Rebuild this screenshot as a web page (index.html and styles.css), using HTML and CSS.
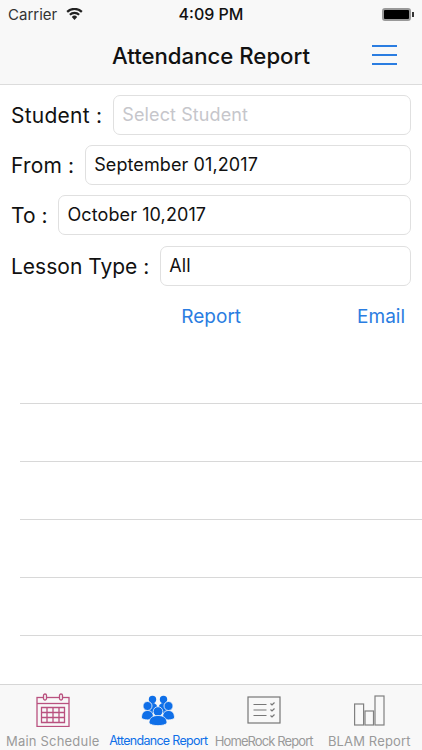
FILE: index.html
```html
<!DOCTYPE html>
<html lang="en">

<head>
  <meta charset="UTF-8">
  <meta name="viewport" content="width=device-width, initial-scale=1.0">
  <title>Attendance Report</title>
  <link rel="stylesheet" href="styles.css">
</head>

<body>
  <div class="screen">
    <header class="top">
      <div class="status">
        <div class="status-left">
          <span>Carrier</span>
          <svg class="wifi" width="17" height="12" viewBox="0 0 17 12">
            <path d="M8.5 12 5.8 8.9a3.8 3.8 0 0 1 5.4 0zM4.6 7.6 3.1 6a7.7 7.7 0 0 1 10.8 0l-1.500 1.600a5.600 5.600 0 0 0-7.800 0zM1.900 4.700.4 3.100a11.600 11.600 0 0 1 16.200 0l-1.500 1.600a9.500 9.500 0 0 0-13.200 0z" fill="#222" />
          </svg>
        </div>
        <span class="clock">4:09 PM</span>
        <div class="battery-wrap">
          <div class="battery"></div>
          <span class="battery-nub"></span>
        </div>
      </div>
      <div class="navbar">
        <h1>Attendance Report</h1>
        <div class="menu"><span></span><span></span><span></span></div>
      </div>
    </header>

    <main class="content">
      <div class="row">
        <label class="label-student">Student :</label>
        <div class="field placeholder">Select Student</div>
      </div>
      <div class="row">
        <label class="label-from">From :</label>
        <div class="field">September 01,2017</div>
      </div>
      <div class="row">
        <label class="label-to">To :</label>
        <div class="field">October 10,2017</div>
      </div>
      <div class="row row-lesson">
        <label class="label-lesson">Lesson Type :</label>
        <div class="field">All</div>
      </div>
      <div class="actions">
        <a class="report-link">Report</a>
        <a class="email-link">Email</a>
      </div>
      <ul class="list">
        <li></li>
        <li></li>
        <li></li>
        <li></li>
        <li></li>
      </ul>
    </main>

    <nav class="tabs">
      <div class="tab">
        <div class="tab-icon">
          <svg width="34" height="34" viewBox="0 0 34 34" fill="none" stroke="#b9517f" stroke-width="1.3">
            <rect x="1" y="4.500" width="32" height="29" />
            <path d="M1 10.500h32" />
            <rect x="7.500" y="1" width="3" height="6" rx="1.500" fill="#f8f8f8" />
            <rect x="23.500" y="1" width="3" height="6" rx="1.500" fill="#f8f8f8" />
            <path d="M5.500 14.500h23v15h-23zM5.500 19.500h23M5.500 24.500h23M11 14.500v15M17 14.500v15M23 14.500v15" />
          </svg>
        </div>
        <span class="tab-label label-main">Main Schedule</span>
      </div>
      <div class="tab active">
        <div class="tab-icon">
          <svg width="34" height="31" viewBox="0 0 34 31" fill="#0f6fe8" stroke="#f8f8f8" stroke-width="0.8">
            <circle cx="11.500" cy="4.500" r="3.700" stroke="none" />
            <circle cx="22.500" cy="4.500" r="3.700" stroke="none" />
            <ellipse cx="11.500" cy="13" rx="5" ry="5" stroke="none" />
            <ellipse cx="22.500" cy="13" rx="5" ry="5" stroke="none" />
            <circle cx="6.500" cy="11" r="4.500" />
            <circle cx="27.500" cy="11" r="4.500" />
            <path d="M0.500 23c0-5 2.200-7.500 6-7.500s6 2.500 6 7.500c-2 2.500-10 2.500-12 0z" />
            <path d="M21.500 23c0-5 2.200-7.500 6-7.500s6 2.500 6 7.500c-2 2.500-10 2.500-12 0z" />
            <circle cx="17" cy="16.500" r="4.800" />
            <path d="M8 28c0-5 3.500-7.500 9-7.500s9 2.500 9 7.500c-2 3.500-16 3.500-18 0z" />
          </svg>
        </div>
        <span class="tab-label label-attendance">Attendance Report</span>
      </div>
      <div class="tab">
        <div class="tab-icon">
          <svg width="34" height="28" viewBox="0 0 34 28" fill="none" stroke="#777" stroke-width="1.200">
            <rect x="1" y="1" width="32" height="26" />
            <path d="M6.500 8.500h13M6.500 14h13M6.500 19.500h13" />
            <path d="M23.500 7.500l1.500 1.500 2.500-2.500M23.500 13.500l1.500 1.500 2.500-2.500M23.500 19.500l1.500 1.500 2.500-2.500" />
          </svg>
        </div>
        <span class="tab-label label-homerock">HomeRock Report</span>
      </div>
      <div class="tab">
        <div class="tab-icon">
          <svg width="31" height="31" viewBox="0 0 31 31" fill="none" stroke="#808080" stroke-width="1.200">
            <rect x="0.600" y="9" width="9" height="21" />
            <rect x="11" y="16" width="8.500" height="14" />
            <rect x="21" y="1" width="9" height="29" />
          </svg>
        </div>
        <span class="tab-label label-blam">BLAM Report</span>
      </div>
    </nav>
  </div>
</body>

</html>
```

FILE: styles.css
```css
body {
  margin: 0;
  font-family: Inter, "Liberation Sans", sans-serif;
  background-color: #fff;
  color: #111;
}

.screen {
  display: flex;
  flex-direction: column;
  width: 422px;
  height: 750px;
  overflow: hidden;
}

.top {
  flex-shrink: 0;
  height: 85px;
  box-sizing: border-box;
  background-color: #f8f8f8;
  border-bottom: 1px solid #dcdcdc;
}

.status {
  display: flex;
  justify-content: space-between;
  align-items: center;
  height: 28px;
  padding: 0 8px;
  font-size: 15px;
  color: #333;
}

.status-left {
  display: flex;
  align-items: center;
  gap: 9px;
  width: 140px;
}

.clock {
  font-size: 16px;
  font-weight: 500;
  color: #111;
}

.battery-wrap {
  display: flex;
  align-items: center;
  justify-content: flex-end;
  width: 140px;
}

.battery {
  box-sizing: border-box;
  width: 29px;
  height: 13px;
  border: 2px solid #999;
  border-radius: 3px;
  background-color: #000;
}

.battery-nub {
  width: 2px;
  height: 5px;
  margin-left: 1px;
  background-color: #333;
}

.navbar {
  display: flex;
  justify-content: center;
  align-items: center;
  position: relative;
  box-sizing: border-box;
  height: 56px;
  padding-bottom: 2px;
}

h1 {
  margin: 0;
  font-size: 22.2px;
  font-weight: 500;
  color: #111;
}

.menu {
  position: absolute;
  top: 17px;
  right: 25px;
  display: flex;
  flex-direction: column;
  gap: 7px;
  width: 25px;
}

.menu span {
  height: 2px;
  background-color: #2a7de1;
}

.content {
  flex: 1;
  min-height: 0;
  overflow: hidden;
  padding-top: 10px;
}

.row {
  display: flex;
  align-items: center;
  gap: 11px;
  height: 40px;
  margin-bottom: 10px;
  padding: 0 11px;
}

.row-lesson {
  margin-top: 11px;
}

label {
  font-size: 21px;
  white-space: nowrap;
}

.label-student {
  letter-spacing: 0.25px;
}

.label-from {
  letter-spacing: 0.15px;
}

.field {
  flex: 1;
  box-sizing: border-box;
  height: 40px;
  padding: 0 8px;
  border: 1px solid #e0e0e0;
  border-radius: 7px;
  font-size: 18px;
  letter-spacing: 0.1px;
  line-height: 38px;
  color: #111;
}

.placeholder {
  color: #c6c6cb;
}

.actions {
  display: flex;
  justify-content: flex-end;
  gap: 116px;
  padding-right: 17px;
  margin-top: 19px;
  font-size: 19px;
  line-height: 24px;
  color: #2a7de1;
}

.list {
  list-style: none;
  margin: 74px 0 0 20px;
  padding: 0;
}

.list li {
  height: 58px;
  box-sizing: border-box;
  border-top: 1px solid #d8d8d8;
}

.tabs {
  flex-shrink: 0;
  display: grid;
  grid-template-columns: repeat(4, 1fr);
  height: 66px;
  box-sizing: border-box;
  background-color: #f8f8f8;
  border-top: 1px solid #d6d6d6;
}

.tab {
  display: flex;
  flex-direction: column;
  align-items: center;
  padding-top: 7px;
  min-width: 0;
}

.tab-icon {
  display: flex;
  align-items: center;
  justify-content: center;
  height: 36px;
}

.tab-label {
  margin-top: 5px;
  font-size: 13px;
  line-height: 16px;
  white-space: nowrap;
  color: #9a9a9a;
}

.label-main {
  letter-spacing: 0.2px;
}

.label-attendance {
  color: #0f6fe8;
  font-size: 12.5px;
  letter-spacing: -0.7px;
}

.label-homerock {
  letter-spacing: -0.9px;
}

.label-blam {
  letter-spacing: 0.15px;
}
```
